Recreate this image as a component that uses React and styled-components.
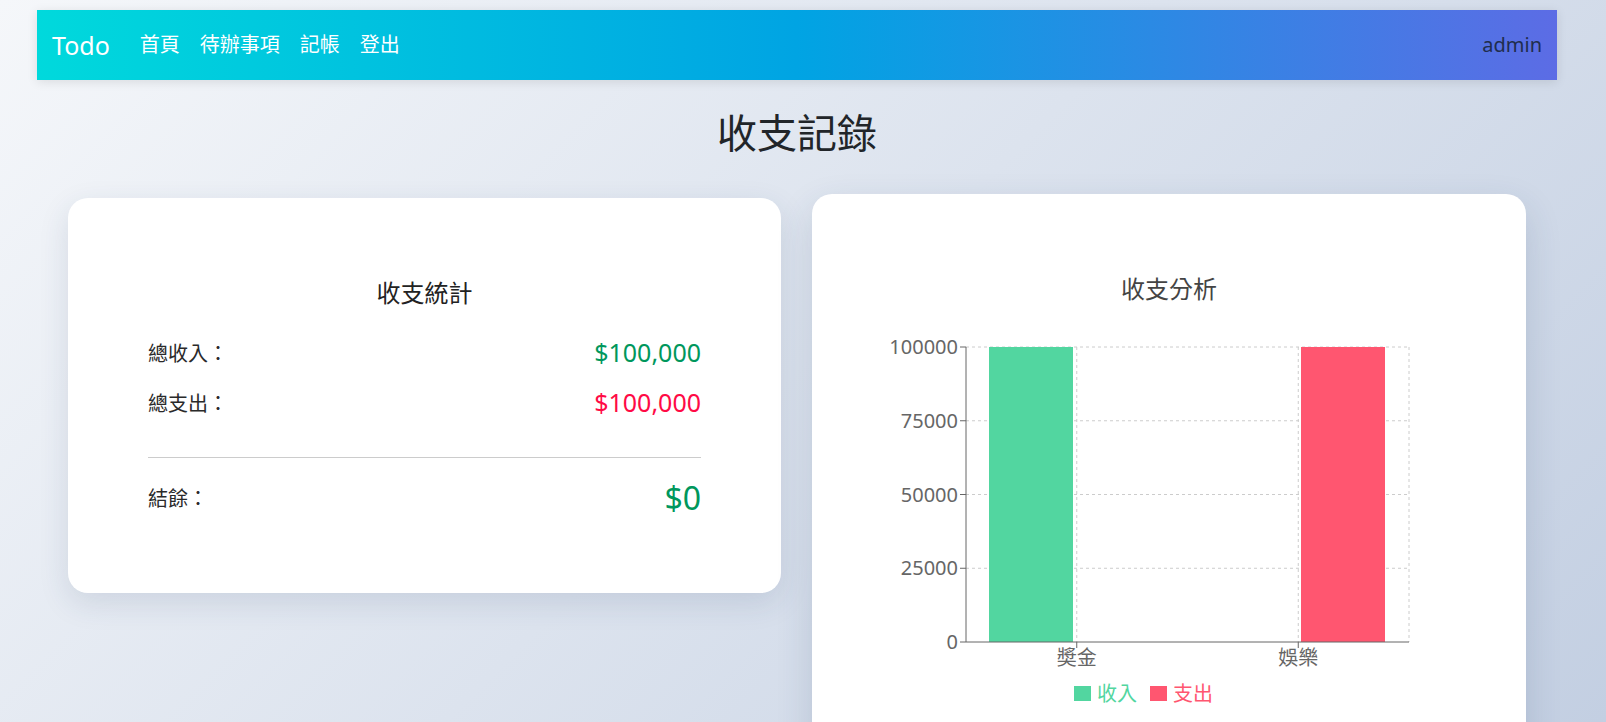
import React from 'react';
import styled, { createGlobalStyle } from 'styled-components';

const GlobalStyle = createGlobalStyle`
  html, body {
    margin: 0;
    padding: 0;
    height: 100%;
    overflow: hidden;
  }
  body {
    font-family: "Noto Sans", "Noto Sans CJK TC", sans-serif;
    background: linear-gradient(135deg, #f5f7fa 0%, #c3cfe2 100%);
    background-attachment: fixed;
    color: #212529;
  }
`;

const Page = styled.div`
  min-height: 100vh;
  padding: 10px 12px 0 0;
  box-sizing: border-box;
`;

const Navbar = styled.nav`
  margin: 0 37px;
  height: 70px;
  padding: 0 15px;
  display: flex;
  align-items: center;
  background: linear-gradient(90deg, #00d9dc 0%, #00a4e3 50%, #5c6ce5 100%);
  box-shadow: 0 2px 10px rgba(0, 0, 0, 0.1);
`;

const Brand = styled.a`
  font-size: 25px;
  line-height: 36px;
  color: #fff;
  margin-right: 20px;
  text-decoration: none;
`;

const NavLink = styled.a`
  font-size: 20px;
  line-height: 30px;
  padding: 0 10px;
  color: #fff;
  text-decoration: none;
`;

const User = styled.span`
  margin-left: auto;
  font-size: 20px;
  line-height: 30px;
  color: #1f2d4d;
`;

const Title = styled.h1`
  margin: 29px 0 0;
  font-size: 40px;
  line-height: 48px;
  font-weight: 400;
  text-align: center;
  color: #212529;
`;

const CardRow = styled.div`
  display: grid;
  grid-template-columns: 1fr 1fr;
  gap: 31px;
  margin: 41px 68px 0;
  align-items: start;
`;

const Card = styled.div`
  background: #fff;
  border-radius: 20px;
  padding: 77px 80px ${(p) => (p.$tall ? '120px' : '72px')};
  box-shadow: ${(p) =>
    p.$raised ? '0 14px 36px rgba(40, 60, 100, 0.16)' : '0 10px 30px rgba(40, 60, 100, 0.13)'};
  transform: ${(p) => (p.$raised ? 'translateY(-4px)' : 'none')};
`;

const CardTitle = styled.h2`
  margin: 0 0 ${(p) => (p.$gap ? p.$gap : 0)}px;
  font-size: 24px;
  line-height: 36px;
  font-weight: 400;
  text-align: center;
  color: ${(p) => p.$color || '#222'};
`;

const StatRow = styled.div`
  display: flex;
  justify-content: space-between;
  align-items: center;
  height: ${(p) => (p.$big ? 48 : 36)}px;
  margin-bottom: ${(p) => p.$mb || 0}px;
`;

const Label = styled.span`
  font-size: 20px;
  color: #2a2a2a;
`;

const Amount = styled.span`
  font-size: ${(p) => (p.$big ? 32 : 25)}px;
  color: ${(p) => (p.$negative ? '#ff0a45' : '#00975c')};
`;

const Divider = styled.hr`
  border: none;
  border-top: 1px solid #cccccc;
  margin: 37px 0 15px;
`;

const ChartSvg = styled.svg`
  display: block;
  overflow: visible;
`;

const INCOME = '#52d6a0';
const EXPENSE = '#ff5670';

const X0 = 74;
const X1 = 517;
const Y0 = 40;
const Y1 = 335;
const ticks = [100000, 75000, 50000, 25000, 0];
const yOf = (v) => Y1 - ((Y1 - Y0) * v) / 100000;
const bandW = (X1 - X0) / 2;
const categories = [
  { name: '奬金', center: X0 + bandW / 2 },
  { name: '娛樂', center: X0 + bandW * 1.5 },
];

function Chart() {
  return (
    <ChartSvg width="554" height="410" fontFamily='"Noto Sans", "Noto Sans CJK TC", sans-serif'>
      {ticks.slice(0, 4).map((t) => (
        <line key={t} x1={X0} x2={X1} y1={yOf(t)} y2={yOf(t)} stroke="#ccc" strokeDasharray="3 3" />
      ))}
      {[...categories.map((c) => c.center), X1].map((x) => (
        <line key={x} x1={x} x2={x} y1={Y0} y2={Y1} stroke="#ccc" strokeDasharray="3 3" />
      ))}
      <rect x="97" y={yOf(100000)} width="84" height={Y1 - yOf(100000)} fill={INCOME} />
      <rect x="409" y={yOf(100000)} width="84" height={Y1 - yOf(100000)} fill={EXPENSE} />
      <line x1={X0} x2={X0} y1={Y0} y2={Y1} stroke="#666" />
      <line x1={X0} x2={X1} y1={Y1} y2={Y1} stroke="#666" />
      {ticks.map((t) => (
        <g key={t}>
          <line x1={X0 - 6} x2={X0} y1={yOf(t)} y2={yOf(t)} stroke="#666" />
          <text x={X0 - 8} y={yOf(t)} dy="0.355em" textAnchor="end" fontSize="20" fill="#666">
            {t}
          </text>
        </g>
      ))}
      {categories.map((c) => (
        <g key={c.name}>
          <line x1={c.center} x2={c.center} y1={Y1} y2={Y1 + 6} stroke="#666" />
          <text x={c.center} y={Y1 + 9} dy="0.71em" textAnchor="middle" fontSize="20" fill="#666">
            {c.name}
          </text>
        </g>
      ))}
      <rect x="182" y="379" width="17" height="15" fill={INCOME} />
      <text x="205" y="387" dy="0.355em" fontSize="20" fill={INCOME}>收入</text>
      <rect x="258" y="379" width="17" height="15" fill={EXPENSE} />
      <text x="281" y="387" dy="0.355em" fontSize="20" fill={EXPENSE}>支出</text>
    </ChartSvg>
  );
}

export default function App() {
  return (
    <Page>
      <GlobalStyle />
      <Navbar>
        <Brand href="#">Todo</Brand>
        <NavLink href="#">首頁</NavLink>
        <NavLink href="#">待辦事項</NavLink>
        <NavLink href="#">記帳</NavLink>
        <NavLink href="#">登出</NavLink>
        <User>admin</User>
      </Navbar>
      <Title>收支記錄</Title>
      <CardRow>
        <Card>
          <CardTitle $gap={23}>收支統計</CardTitle>
          <StatRow $mb={14}>
            <Label>總收入：</Label>
            <Amount>$100,000</Amount>
          </StatRow>
          <StatRow>
            <Label>總支出：</Label>
            <Amount $negative>$100,000</Amount>
          </StatRow>
          <Divider />
          <StatRow $big>
            <Label>結餘：</Label>
            <Amount $big>$0</Amount>
          </StatRow>
        </Card>
        <Card $raised $tall>
          <CardTitle $color="#444">收支分析</CardTitle>
          <Chart />
        </Card>
      </CardRow>
    </Page>
  );
}
